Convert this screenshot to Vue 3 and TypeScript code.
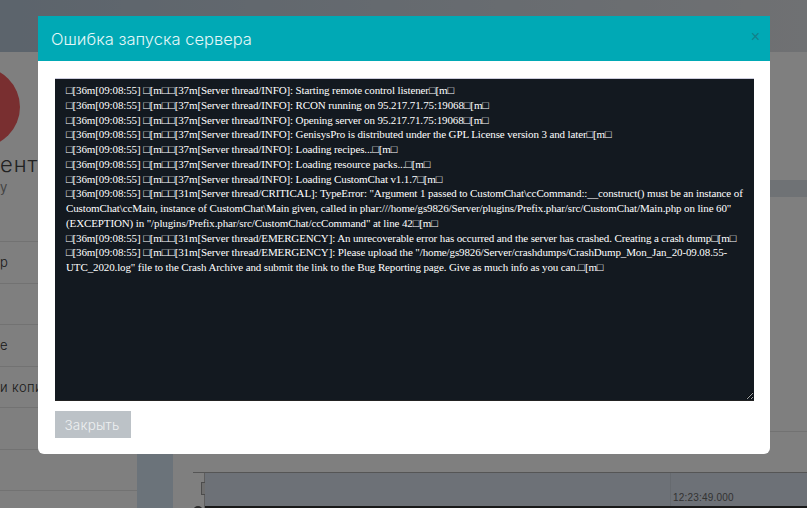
<script setup lang="ts">
const e = '\u25A1'
const pre = `${e}[36m[09:08:55] ${e}[m${e}${e}`
const lines: string[] = [
  `${pre}[37m[Server thread/INFO]: Starting remote control listener${e}[m${e}`,
  `${pre}[37m[Server thread/INFO]: RCON running on 95.217.71.75:19068${e}[m${e}`,
  `${pre}[37m[Server thread/INFO]: Opening server on 95.217.71.75:19068${e}[m${e}`,
  `${pre}[37m[Server thread/INFO]: GenisysPro is distributed under the GPL License version 3 and later${e}[m${e}`,
  `${pre}[37m[Server thread/INFO]: Loading recipes...${e}[m${e}`,
  `${pre}[37m[Server thread/INFO]: Loading resource packs...${e}[m${e}`,
  `${pre}[37m[Server thread/INFO]: Loading CustomChat v1.1.7${e}[m${e}`,
  `${pre}[31m[Server thread/CRITICAL]: TypeError: "Argument 1 passed to CustomChat\\ccCommand::__construct() must be an instance of CustomChat\\ccMain, instance of CustomChat\\Main given, called in phar:///home/gs9826/Server/plugins/Prefix.phar/src/CustomChat/Main.php on line 60" (EXCEPTION) in "/plugins/Prefix.phar/src/CustomChat/ccCommand" at line 42${e}[m${e}`,
  `${pre}[31m[Server thread/EMERGENCY]: An unrecoverable error has occurred and the server has crashed. Creating a crash dump${e}[m${e}`,
  `${pre}[31m[Server thread/EMERGENCY]: Please upload the "/home/gs9826/Server/crashdumps/CrashDump_Mon_Jan_20-09.08.55-UTC_2020.log" file to the Crash Archive and submit the link to the Bug Reporting page. Give as much info as you can.${e}[m${e}`,
]
const log = lines.join('\n')
const rows: string[] = ['р', '', 'е', 'и копи', '', '']
</script>

<template>
  <div class="page">
    <div class="topbar"></div>
    <div class="body">
      <aside class="sidebar">
        <div class="profile">
          <div class="avatar"></div>
          <div class="name">ент</div>
          <div class="sub">у</div>
        </div>
        <div v-for="(r, i) in rows" :key="i" class="row">{{ r }}</div>
      </aside>
      <div class="strip"></div>
      <main class="main">
        <div class="band"></div>
        <div class="fill"></div>
        <div class="chart">
          <div class="axis"><span class="grip"></span></div>
          <div class="plot">
            <span class="tick"></span>
            <span class="time">12:23:49.000</span>
          </div>
        </div>
      </main>
    </div>
  </div>

  <div class="overlay">
    <section class="modal">
      <header class="head">
        <h2 class="title">Ошибка запуска сервера</h2>
        <span class="close">×</span>
      </header>
      <div class="content">
        <textarea class="console" readonly :value="log"></textarea>
        <button class="btn" type="button">Закрыть</button>
      </div>
    </section>
  </div>
</template>

<style>
html, body { margin: 0; height: 100%; overflow: hidden; }
</style>

<style scoped>
.page {
  width: 807px;
  height: 508px;
  display: flex;
  flex-direction: column;
  overflow: hidden;
  background: #fff;
  font-family: "Inter", sans-serif;
}
.topbar {
  height: 52px;
  flex: none;
  background: linear-gradient(90deg, #b8c8d8, #dfe2e6);
}
.body { flex: 1; display: flex; min-height: 0; }
.sidebar { width: 137px; flex: none; overflow: hidden; }
.profile { height: 190px; border-bottom: 1px solid #e4e4e4; box-sizing: border-box; overflow: hidden; }
.avatar {
  width: 80px;
  height: 80px;
  margin: 15px 0 0 -60px;
  border-radius: 50%;
  background: #f25f60;
}
.name { margin: 2px 0 0 0; font-size: 22px; font-weight: 300; line-height: 30px; letter-spacing: 1px; color: #444; white-space: nowrap; }
.sub { font-size: 13px; color: #888; }
.row {
  height: 41.5px;
  box-sizing: border-box;
  border-bottom: 1px solid #e4e4e4;
  font-size: 13px;
  font-weight: 300;
  line-height: 40px;
  letter-spacing: 0.4px;
  color: #333;
  white-space: nowrap;
  overflow: hidden;
}
.strip { width: 36px; flex: none; background: #d6e6f5; }
.main { flex: 1; display: flex; flex-direction: column; min-width: 0; }
.band { height: 17px; margin-top: 128px; background: #dfe5ea; }
.fill { flex: 1; position: relative; }
.fill::after {
  content: "";
  position: absolute;
  left: 0;
  right: 0;
  bottom: 40px;
  border-top: 1px solid #e4e4e4;
}
.chart {
  height: 35px;
  flex: none;
  display: flex;
  margin-left: 20px;
  border-top: 1px solid #aaa;
}
.axis { width: 11px; position: relative; flex: none; border-right: 1px solid #bbb; }
.axis::after {
  content: "";
  position: absolute;
  left: 0;
  bottom: -8px;
  width: 10px;
  height: 10px;
  border-radius: 50%;
  background: #555;
}
.grip {
  position: absolute;
  left: 8px;
  top: 9px;
  width: 6px;
  height: 13px;
  border: 1px solid #999;
  background: #ddd;
  box-sizing: border-box;
}
.plot {
  flex: 1;
  background: #dbe3ee;
  border-bottom: 2px solid #333;
  position: relative;
}
.tick {
  position: absolute;
  left: 465px;
  top: 0;
  bottom: 0;
  border-left: 1px solid #cdd5df;
}
.time {
  position: absolute;
  left: 468px;
  top: 19px;
  font-size: 10px;
  font-family: "Liberation Sans", sans-serif;
  color: #666;
  letter-spacing: 0.2px;
}
.overlay {
  position: fixed;
  inset: 0;
  background: rgba(0, 0, 0, 0.5);
}
.modal {
  position: absolute;
  left: 38px;
  top: 16px;
  width: 732px;
  height: 438px;
  background: #fff;
  border-radius: 0 0 6px 6px;
  display: flex;
  flex-direction: column;
  overflow: hidden;
}
.head {
  height: 45px;
  flex: none;
  background: #00a9b5;
  display: flex;
  align-items: center;
  justify-content: space-between;
  padding: 0 10px 0 13px;
}
.title {
  margin: 0;
  font-family: "Inter", sans-serif;
  font-size: 16.5px;
  font-weight: 300;
  letter-spacing: 0;
  color: #e4f7f8;
}
.close {
  font-family: "Liberation Sans", sans-serif;
  font-size: 16px;
  line-height: 16px;
  color: #14808a;
  margin-top: -4px;
}
.content {
  flex: 1;
  display: flex;
  flex-direction: column;
  align-items: flex-start;
  padding: 17px 17px 16px;
  gap: 10px;
}
.console {
  width: 699px;
  height: 323px;
  flex: none;
  box-sizing: border-box;
  margin: 0;
  padding: 4px 9px 4px 11px;
  border: 0;
  border-top: 1px solid #ccd;
  border-bottom: 1px solid #222;
  outline: none;
  border-radius: 0;
  background: #131920;
  color: #fff;
  font-family: "Liberation Serif", "DejaVu Serif", serif;
  font-size: 11px;
  letter-spacing: -0.12px;
  line-height: 14.75px;
  overflow: hidden;
  resize: vertical;
}
.btn {
  width: 76px;
  height: 27px;
  border: 0;
  padding: 0 2px 0 0;
  background: #bcc2c7;
  color: #eef0f1;
  font-family: "Inter", sans-serif;
  font-size: 13.5px;
  font-weight: 300;
  letter-spacing: 0.2px;
}
</style>
